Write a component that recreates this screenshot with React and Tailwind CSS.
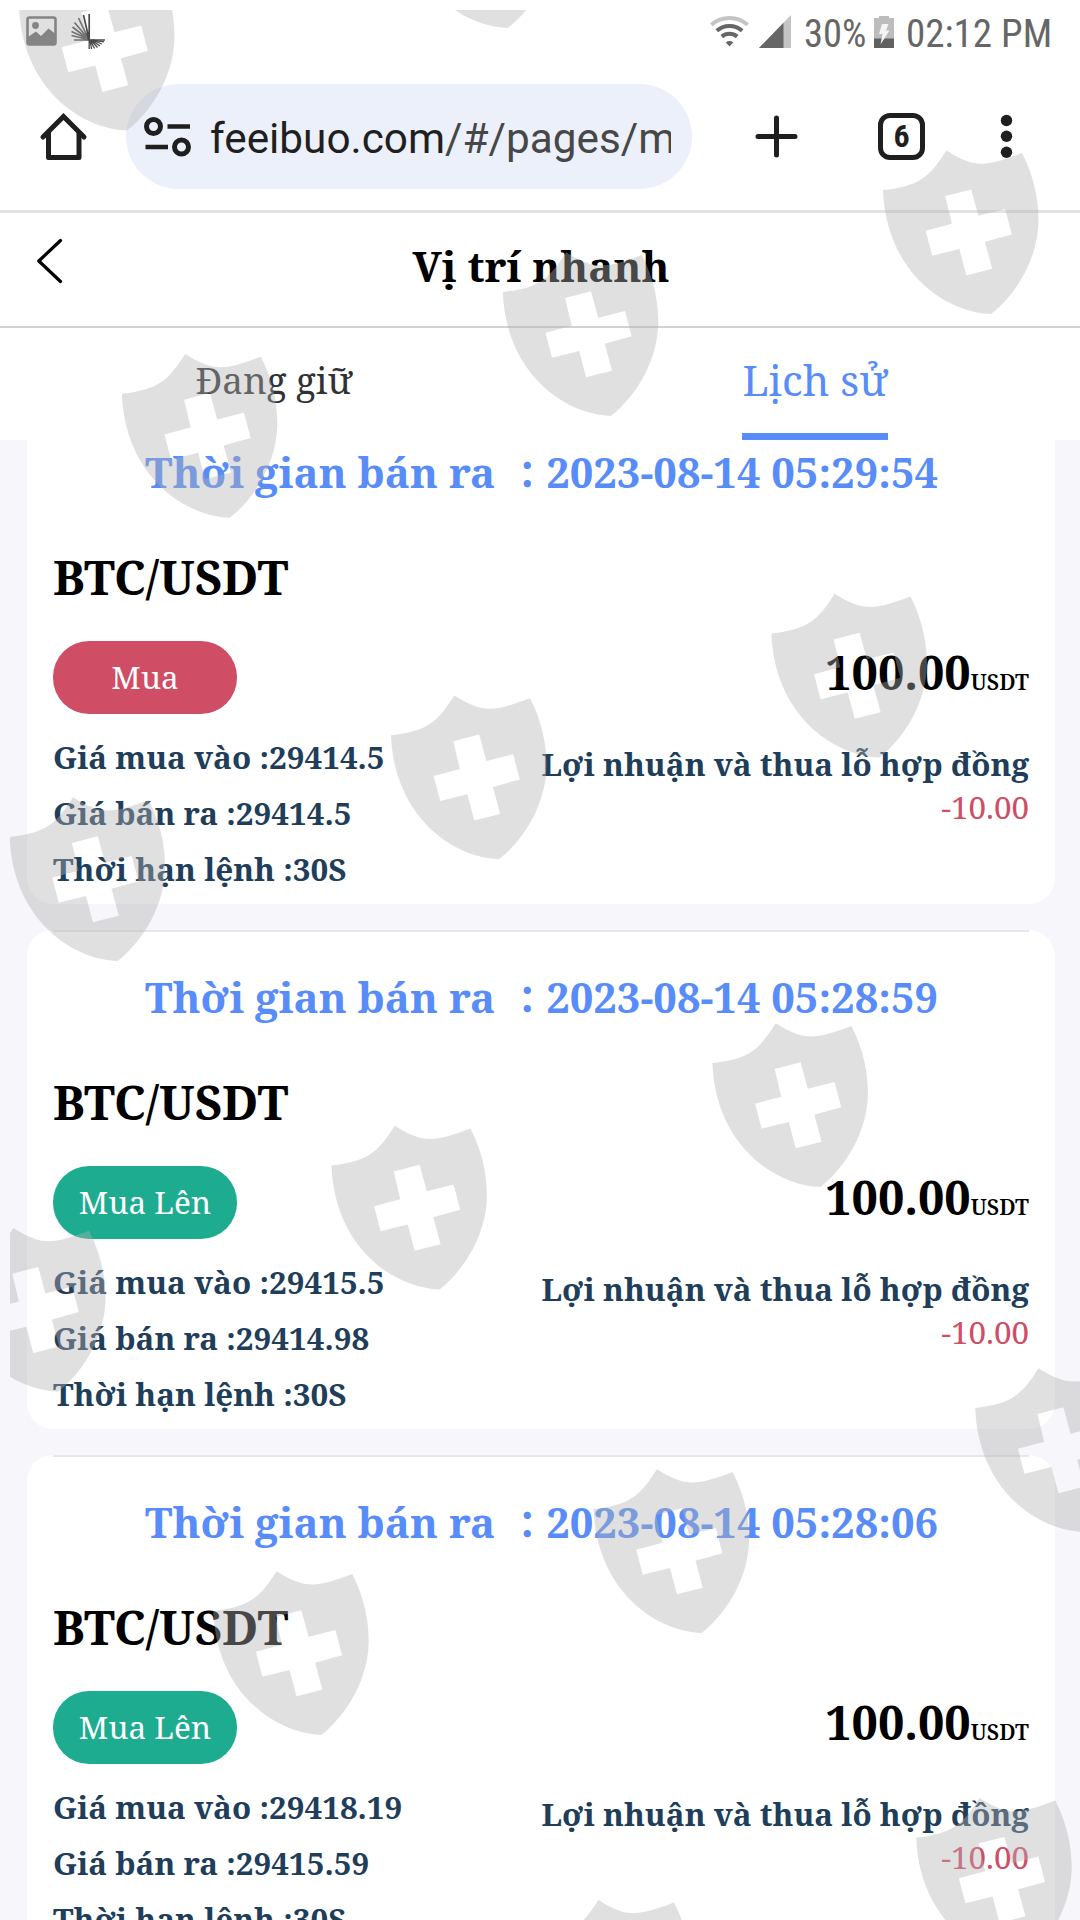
const orders = [
  {
    time: '2023-08-14 05:29:54',
    side: 'Mua',
    color: 'bg-[#cf4d65]',
    open: '29414.5',
    close: '29414.5',
  },
  {
    time: '2023-08-14 05:28:59',
    side: 'Mua Lên',
    color: 'bg-[#1eac90]',
    open: '29415.5',
    close: '29414.98',
  },
  {
    time: '2023-08-14 05:28:06',
    side: 'Mua Lên',
    color: 'bg-[#1eac90]',
    open: '29418.19',
    close: '29415.59',
  },
];

// left corner of every shield in the overlay
const shields = [
  [19, 6.6],
  [399.8, -96],
  [883, 190.1],
  [502.8, 292],
  [121.8, 393.8],
  [771.4, 633.5],
  [391, 735.3],
  [9.6, 837],
  [712.4, 1063],
  [331.4, 1165.5],
  [-50, 1267.7],
  [975.2, 1408],
  [593.6, 1509],
  [213.2, 1611],
  [916.2, 1837.6],
  [535, 1939.6],
];

function StatusBar() {
  return (
    <div className="flex h-[64px] items-start font-['Roboto_Condensed',sans-serif] text-[39px] leading-none text-[#666]">
      <svg className="mt-[16px] ml-[26px]" width="31" height="30" viewBox="0 0 31 30">
        <rect x="1.5" y="1.5" width="28" height="27" rx="2" fill="none" stroke="#666" strokeWidth="2.6" />
        <circle cx="9.5" cy="9.5" r="3.4" fill="#666" />
        <path d="M2 21L10 15.5L15 20L22.5 12.5L29.5 18V28.5H2Z" fill="#666" />
      </svg>
      <svg className="mt-[13px] ml-[14px]" width="35" height="37" viewBox="0 0 35 37" fill="none" stroke="#4a4a4a" strokeWidth="1.7">
        <path d="M18.2 1V27M18 26L12.5 2M17.5 26L7.5 5M17.5 26L3.5 9.5M17 26L1.5 14M17 26L.5 18.5M17 26.5L.5 22.5M3 27H34" />
        <path d="M18.2 27V36M19 27L20.5 36M19 27L23.5 35.5M19.5 27L26.5 34.5M20 27L29 33M20.5 27L31 31M21 27L33 28.8" strokeWidth="1.3" />
      </svg>

      <svg className="mt-[15px] ml-[604px]" width="39" height="32" viewBox="0 0 39 32" fill="none" strokeWidth="4">
        <path d="M1.3 9.8A27.5 27.5 0 0 1 37.7 9.8" stroke="#c4c4c4" />
        <path d="M6.8 15.8A19.5 19.5 0 0 1 32.2 15.8" stroke="#666" />
        <path d="M11.8 21.6A12 12 0 0 1 27.2 21.6" stroke="#666" />
        <path d="M15.8 27.5L19.5 31.5L23.2 27.5A5.5 5.5 0 0 0 15.8 27.5Z" fill="#666" stroke="none" />
      </svg>
      <svg className="mt-[15px] ml-[10px]" width="32" height="33" viewBox="0 0 32 33">
        <path d="M0 33L32 0V33Z" fill="#c4c4c4" />
        <path d="M0 33L24.5 7.7V33Z" fill="#666" />
      </svg>
      <span className="mt-[15px] ml-[13px] w-[60px] text-[38.5px]">30%</span>
      <svg className="mt-[16px] ml-[10px]" width="20" height="32" viewBox="0 0 20 32">
        <path d="M5 0H15V2H20V32H0V2H5Z" fill="#bcbcbc" />
        <path d="M0 22.5H20V32H0Z" fill="#606060" />
        <path d="M8 8H14.5L12 14.5H15.5L6.5 28.5L8.5 18H5Z" fill="#f4f4f4" />
      </svg>
      <span className="mt-[15px] ml-[12px] whitespace-nowrap">02:12 PM</span>
    </div>
  );
}

function BrowserBar() {
  return (
    <div className="flex h-[149px] items-start border-b-3 border-[#e1e3e1] pt-[20px]">
      <svg className="mt-[28px] ml-[39px]" width="49" height="50" viewBox="0 0 49 50" fill="none" stroke="#1f1f1f" strokeWidth="5" strokeLinejoin="round" strokeLinecap="round">
        <path d="M4 25L24.5 4.5L45 25" strokeLinejoin="miter" />
        <path d="M9.5 21V45.5H40V21" />
      </svg>
      <div className="ml-[38px] flex h-[105px] w-[566px] items-center rounded-full bg-[#ecf0fa] pl-[18px]">
        <svg width="48" height="42" viewBox="0 0 48 42" fill="none" stroke="#1f1f1f" strokeWidth="5">
          <circle cx="9.5" cy="10.5" r="7" />
          <path d="M23.5 10.5H46M1.5 31H24" strokeWidth="4.5" />
          <circle cx="37.5" cy="31" r="7" />
        </svg>
        <div className="mt-1 ml-[18px] w-[461px] overflow-hidden font-['Roboto',sans-serif] text-[42.3px] leading-[60px] whitespace-nowrap text-[#1f1f1f]">
          feeibuo.com<span className="text-[#474747]">/#/pages/m</span>
        </div>
      </div>
      <svg className="mt-[31px] ml-[63px]" width="43" height="43" viewBox="0 0 43 43" stroke="#1f1f1f" strokeWidth="5" strokeLinecap="round">
        <path d="M21.5 3V40M3 21.5H40" />
      </svg>
      <div className="mt-[29px] ml-[80px] flex h-[47px] w-[47px] items-center justify-center rounded-[12px] border-5 border-[#1f1f1f] pb-[2px] font-['Roboto_Condensed',sans-serif] text-[32px] leading-none font-bold text-[#1f1f1f]">
        6
      </div>
      <svg className="mt-[30px] ml-[75px]" width="13" height="44" viewBox="0 0 13 44" fill="#1f1f1f">
        <circle cx="6.5" cy="6.5" r="5.7" />
        <circle cx="6.5" cy="22.3" r="5.7" />
        <circle cx="6.5" cy="38.2" r="5.7" />
      </svg>
    </div>
  );
}

function PageHeader() {
  return (
    <div className="flex h-[115px] items-start border-b-2 border-[#d2d2d6]">
      <svg className="mt-[25px] ml-[36px]" width="28" height="46" viewBox="0 0 28 46" fill="none" stroke="#000" strokeWidth="3.2" strokeLinecap="round" strokeLinejoin="round">
        <path d="M24.5 2.5L2.8 23L24.5 43.5" />
      </svg>
      <h1 className="mt-[23px] mr-[62px] flex-1 text-center text-[42px] leading-[60px] font-bold text-black">Vị trí nhanh</h1>
    </div>
  );
}

function Tabs() {
  return (
    <div className="flex h-[112px]">
      <div className="flex w-[548px] justify-center pt-[22px] text-[36.8px] leading-[60px] text-[#303133]">Đang giữ</div>
      <div className="flex w-[532px] justify-center pl-[2px]">
        <div className="h-full border-b-7 border-[#588cf8] pt-[22px] text-[42px] leading-[60px] text-[#588cf8]">Lịch sử</div>
      </div>
    </div>
  );
}

function OrderCard({ order }) {
  return (
    <div className="h-[499px] shrink-0 rounded-[26px] bg-white px-[26px]">
      <div className="border-t-2 border-[#e6e7eb]" />
      <div className="flex h-[95px] items-center pt-[34px] pl-[92px] text-[41.8px] leading-[60px] font-bold whitespace-pre text-[#588cf8]">
        <span className="text-[42px]">Thời gian bán ra </span>
        <span className="w-[40px] pl-[2px] font-['Noto_Sans_CJK_JP'] text-[38px]">：</span>
        <span className="text-[41.700px]">{order.time}</span>
      </div>
      <div className="mt-[45px] text-[47.4px] leading-[60px] font-bold text-black">BTC/USDT</div>
      <div className="mt-[34px] flex justify-between">
        <div>
          <div className={`flex h-[73px] w-[184px] items-center justify-center rounded-[36px] pb-[2px] text-[31.5px] text-white ${order.color}`}>
            {order.side}
          </div>
          <div className="mt-[14.5px] text-[31.4px] leading-[56.3px] font-bold whitespace-nowrap text-[#203e5a]">
            <p>Giá mua vào :{order.open}</p>
            <p>Giá bán ra :{order.close}</p>
            <p>Thời hạn lệnh :30S</p>
          </div>
        </div>
        <div className="text-right whitespace-nowrap">
          <p className="mt-[1px] text-[46.7px] leading-[60px] font-bold text-black">
            100.00<span className="text-[21.800px] font-semibold">USDT</span>
          </p>
          <p className="mt-[30px] text-[31.4px] leading-[43px] font-bold text-[#203e5a]">Lợi nhuận và thua lỗ hợp đồng</p>
          <p className="text-[31.4px] leading-[43px] text-[#cf4d65]">-10.00</p>
        </div>
      </div>
    </div>
  );
}

function ShieldOverlay() {
  return (
    <div className="pointer-events-none absolute top-[10px] right-0 bottom-0 left-[10px] overflow-hidden">
      <svg width="1070" height="1910" viewBox="10 10 1070 1910" fill="#b2b2b2" fillOpacity="0.4">
        {shields.map(([x, y]) => (
          <path
            key={`${x},${y}`}
            transform={`translate(${x} ${y})`}
            fillRule="evenodd"
            d="M0 0C37 -4 46 -13 63.4 -39.7C92 -22 102 -23 139 -37C152 -12 155.5 12 155.5 30C155.5 66 135 103 108 124C60 122 3 80 0 0ZM62.3 6L88.2 -.7L95.4 25.7L122.2 19L128.8 44.3L101.9 51.7L109.2 78.7L83.3 85.3L76.4 59L49.2 65.7L42.7 40.7L68.9 33.7Z"
          />
        ))}
      </svg>
    </div>
  );
}

export default function App() {
  return (
    <div className="relative flex h-[1920px] w-[1080px] flex-col overflow-hidden bg-white font-['Noto_Serif','DejaVu_Serif',serif]">
      <StatusBar />
      <BrowserBar />
      <PageHeader />
      <Tabs />
      <div className="flex-1 overflow-hidden bg-[#f6f6fb] pr-[25px] pl-[27px]">
        <div className="-mt-[35px] flex flex-col gap-[26px]">
          {orders.map((order) => (
            <OrderCard key={order.time} order={order} />
          ))}
        </div>
      </div>
      <ShieldOverlay />
    </div>
  );
}
